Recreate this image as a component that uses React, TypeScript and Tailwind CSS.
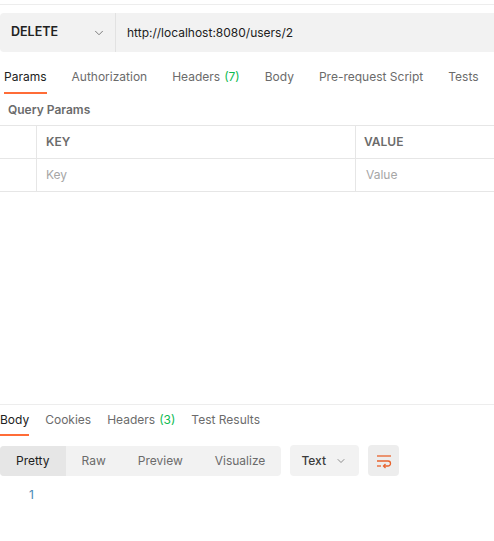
import React from 'react';
import { ChevronDown } from 'lucide-react';

const requestTabs = [
  { label: 'Params', active: true },
  { label: 'Authorization' },
  { label: 'Headers', count: 7 },
  { label: 'Body' },
  { label: 'Pre-request Script' },
  { label: 'Tests' },
];

const responseTabs = [
  { label: 'Body', active: true },
  { label: 'Cookies' },
  { label: 'Headers', count: 3 },
  { label: 'Test Results' },
];

const WrapIcon = () => (
  <svg width="16" height="16" viewBox="0 0 16 16" fill="none" stroke="#e8622c" strokeWidth="1.3">
    <path d="M1 3h14" />
    <path d="M1 8h11a2.5 2.5 0 0 1 0 5H8" />
    <path d="M9.5 11 7.5 13l2 2" />
    <path d="M1 13h4" />
  </svg>
);

const App = () => {
  return (
    <div className="w-[494px] h-[541px] bg-white overflow-hidden text-[12px] text-[#212121]" style={{ fontFamily: 'Inter, "Noto Sans", sans-serif' }}>
      <div className="h-[5px] border-b border-[#ededed]"></div>

      {/* Request bar */}
      <div className="mt-[8px] flex h-[39px] bg-[#f2f2f2] rounded-l-[4px]">
        <div className="w-[116px] flex items-center justify-between pl-[11px] pr-[9px] border-r border-[#e2e2e2]">
          <span className="font-semibold text-[12.5px] text-[#212121]">DELETE</span>
          <ChevronDown className="w-[14px] h-[14px] text-[#6b6b6b]" strokeWidth={1.5} />
        </div>
        <div className="flex items-center pl-[11px] text-[#212121]">http://localhost:8080/users/2</div>
      </div>

      {/* Request tabs */}
      <div className="mt-[10px] flex gap-[25px] pl-[4px] h-[32px]">
        {requestTabs.map((t) => (
          <div
            key={t.label}
            className={`flex items-center border-b-2 whitespace-nowrap ${t.active ? 'border-[#ff6c37] text-[#212121]' : 'border-transparent text-[#6b6b6b]'}`}
          >
            {t.label}
            {t.count !== undefined && <span className="ml-[4px] text-[#0cbb52]">({t.count})</span>}
          </div>
        ))}
      </div>

      <div className="h-[31px] pt-[1px] flex items-center pl-[8px] font-semibold text-[#6b6b6b]">Query Params</div>

      {/* Params table */}
      <div className="border-t border-[#e6e6e6]">
        <div className="flex h-[33px] border-b border-[#e6e6e6] font-semibold text-[#6b6b6b]">
          <div className="w-[37px] border-r border-[#e6e6e6]"></div>
          <div className="w-[319px] flex items-center pl-[9px] border-r border-[#e6e6e6]">KEY</div>
          <div className="flex-1 flex items-center pl-[8px]">VALUE</div>
        </div>
        <div className="flex h-[33px] border-b border-[#e6e6e6] text-[#a6a6a6]">
          <div className="w-[37px] border-r border-[#e6e6e6]"></div>
          <div className="w-[319px] flex items-center pl-[9px] border-r border-[#e6e6e6]">Key</div>
          <div className="flex-1 flex items-center pl-[10px]">Value</div>
        </div>
      </div>

      {/* Response */}
      <div className="mt-[212px] border-t border-[#ededed]">
        <div className="flex gap-[16px] h-[31px]">
          {responseTabs.map((t) => (
            <div
              key={t.label}
              className={`flex items-center border-b-2 whitespace-nowrap ${t.active ? 'border-[#ff6c37] text-[#212121]' : 'border-transparent text-[#6b6b6b]'}`}
            >
              {t.label}
              {t.count !== undefined && <span className="ml-[4px] text-[#0cbb52]">({t.count})</span>}
            </div>
          ))}
        </div>

        <div className="mt-[9px] flex items-center gap-[9px]">
          <div className="flex h-[30px] bg-[#f2f2f2] rounded-[4px] overflow-hidden">
            <div className="px-4 flex items-center bg-[#e6e6e6] text-[#212121]">Pretty</div>
            <div className="px-4 flex items-center text-[#6b6b6b]">Raw</div>
            <div className="px-4 flex items-center text-[#6b6b6b]">Preview</div>
            <div className="px-4 flex items-center text-[#6b6b6b]">Visualize</div>
          </div>
          <div className="w-[69px] h-[31px] bg-[#f2f2f2] rounded-[4px] flex items-center justify-between pl-[11px] pr-[12px]">
            <span className="font-medium text-[#3b3b3b]">Text</span>
            <ChevronDown className="w-[12px] h-[12px] text-[#6b6b6b]" strokeWidth={1.5} />
          </div>
          <div className="w-[31px] h-[31px] bg-[#ededed] rounded-[4px] flex items-center justify-center">
            <WrapIcon />
          </div>
        </div>

        <div className="mt-[10px] pl-[29px] text-[#4a8ab5]">1</div>
      </div>
    </div>
  );
};

export default App;
